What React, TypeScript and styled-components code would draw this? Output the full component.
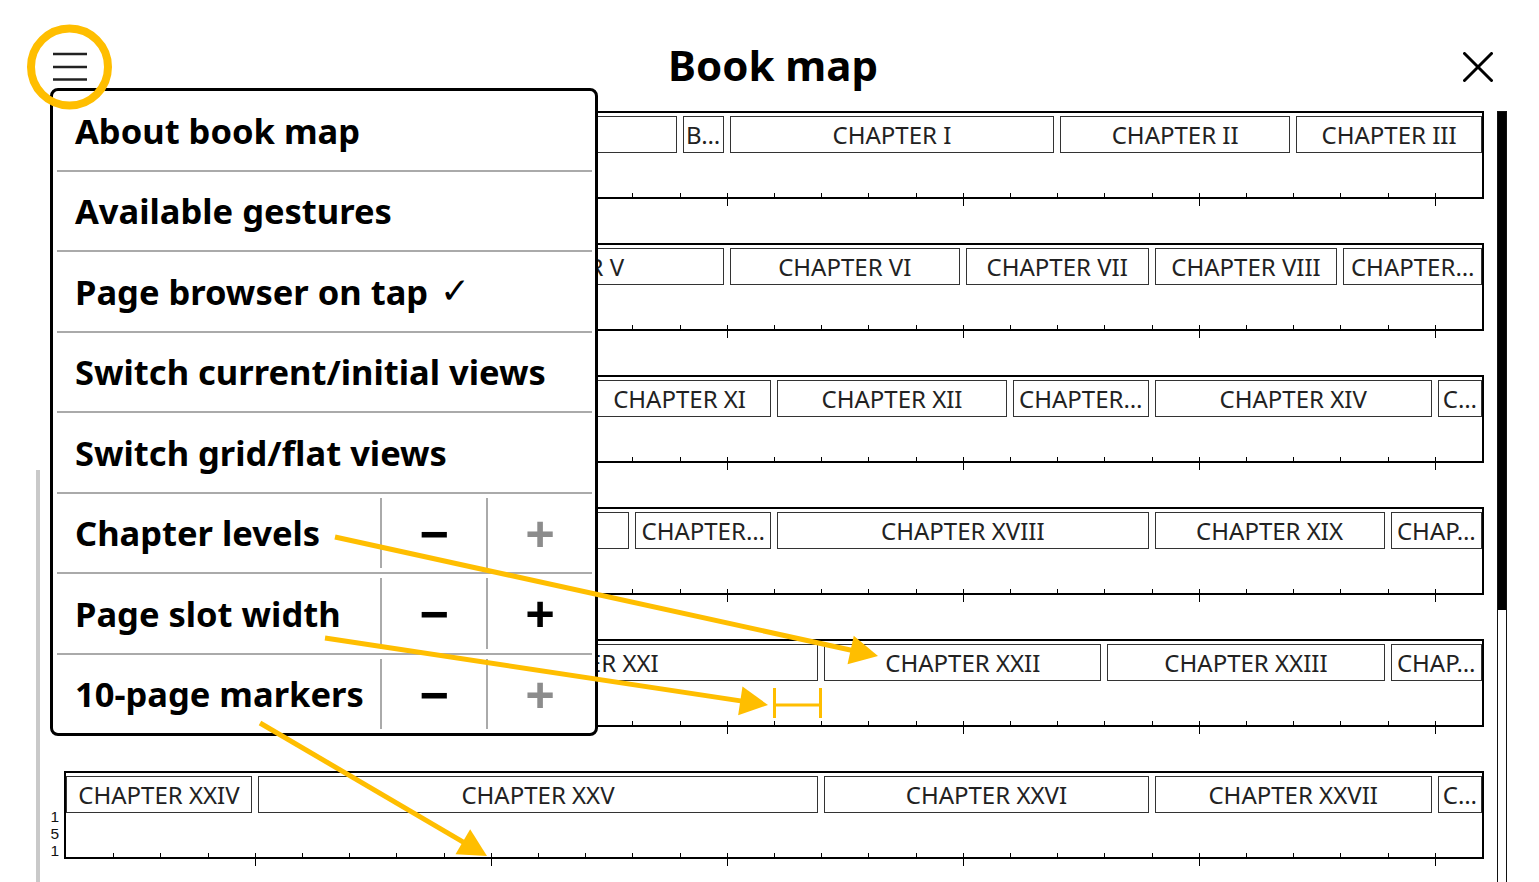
import React from 'react'
import styled, { createGlobalStyle } from 'styled-components'

const SLOT = 47.2
const PAGES_PER_ROW = 30
const YELLOW = '#FFBE00'

const GlobalStyle = createGlobalStyle`
  html, body {
    margin: 0;
    padding: 0;
    background: #fff;
  }
  body {
    font-family: 'Noto Sans', 'DejaVu Sans', sans-serif;
    color: #000;
  }
  * {
    box-sizing: border-box;
  }
`

const Screen = styled.div`
  position: relative;
  width: 1539px;
  height: 882px;
  overflow: hidden;
  display: flex;
  flex-direction: column;
  background: #fff;
`

const TitleBar = styled.header`
  height: 111px;
  flex-shrink: 0;
  padding: 22px 46px 0 53px;
  display: grid;
  grid-template-columns: 1fr auto 1fr;
  align-items: center;
`

const Title = styled.h1`
  margin: 0;
  padding-bottom: 4px;
  font-size: 42px;
  font-weight: 700;
  line-height: normal;
`

const IconButton = styled.button<{ $align: 'start' | 'end' }>`
  justify-self: ${({ $align }) => $align};
  display: flex;
  padding: 0;
  border: none;
  background: none;
  color: #000;
`

const MapArea = styled.div`
  flex: 1;
  min-height: 0;
  display: flex;
  padding-left: 36px;
  overflow: hidden;
`

const PositionBar = styled.div`
  width: 4px;
  flex-shrink: 0;
  margin-top: 359px;
  background: #c9c9c9;
`

const Rows = styled.div`
  display: flex;
  flex-direction: column;
  gap: 44px;
`

const MapRow = styled.div`
  display: flex;
  align-items: flex-end;
`

const PageNumber = styled.div`
  width: 24px;
  padding-right: 5px;
  display: flex;
  flex-direction: column;
  align-items: flex-end;
  font-family: 'Liberation Sans', 'Noto Sans', sans-serif;
  font-size: 15.5px;
  line-height: 17px;
  color: #111;
`

const Digit = styled.span`
  display: block;
  height: 17px;
`

const RowBox = styled.div`
  width: 1420px;
  height: 88px;
  border: 2px solid #000;
  display: flex;
  flex-direction: column;
  justify-content: space-between;
`

const ChapterStrip = styled.div`
  height: 37px;
  margin-top: 3px;
  display: flex;
  overflow: hidden;
`

const ChapterSpan = styled.div<{ $openLeft?: boolean; $openRight?: boolean }>`
  flex-shrink: 0;
  display: flex;
  padding-left: ${({ $openLeft }) => ($openLeft ? 0 : 3)}px;
  padding-right: ${({ $openRight }) => ($openRight ? 0 : 3)}px;
`

const ChapterBox = styled.div`
  flex: 1;
  min-width: 0;
  border: 1px solid #333;
  display: flex;
  align-items: center;
  justify-content: center;
  overflow: hidden;
  white-space: nowrap;
  font-size: 24px;
  line-height: 1;
  color: #222;
`

const Ruler = styled.svg`
  display: block;
  overflow: visible;
`

const ScrollTrack = styled.div`
  width: 10px;
  height: 900px;
  flex-shrink: 0;
  margin-left: 13px;
  border: 1px solid #111;
  display: flex;
  flex-direction: column;
`

const ScrollThumb = styled.div`
  height: 498px;
  background: #000;
`

const Menu = styled.div`
  position: absolute;
  left: 50px;
  top: 88px;
  width: 548px;
  z-index: 2;
  display: flex;
  flex-direction: column;
  background: #fff;
  border: 3px solid #000;
  border-radius: 8px;
`

const MenuItem = styled.div<{ $stepper?: boolean }>`
  height: 78.5px;
  display: flex;
  align-items: center;
  padding-left: 22px;
  padding-right: ${({ $stepper }) => ($stepper ? 3 : 22)}px;
  font-size: 34.5px;
  font-weight: 700;
  white-space: nowrap;
`

const MenuLabel = styled.span`
  flex: 1;
  display: flex;
  align-items: center;
`

const Check = styled.span`
  margin-left: 12px;
  font-family: 'DejaVu Sans', sans-serif;
  font-weight: 400;
  font-size: 36px;
  line-height: 1;
`

const MenuSeparator = styled.div`
  height: 2px;
  margin: 0 3px 0 4px;
  background: #aaa;
`

const StepDivider = styled.div`
  width: 2px;
  align-self: stretch;
  margin: 4px 0;
  background: #aaa;
`

const StepButton = styled.div<{ $disabled?: boolean }>`
  width: 104px;
  display: flex;
  justify-content: center;
  font-size: 52px;
  font-weight: 700;
  line-height: 1;
  color: ${({ $disabled }) => ($disabled ? '#8c8c8c' : '#000')};
`

const Annotations = styled.svg`
  position: absolute;
  left: 0;
  top: 0;
  z-index: 3;
  pointer-events: none;
`

type Chapter = { label: string; pages: number; openLeft?: boolean; openRight?: boolean }

// labels left blank where the slot lies wholly under the open menu
const rows: { first: string; chapters: Chapter[] }[] = [
  {
    first: '',
    chapters: [
      { label: '', pages: 1 },
      { label: '', pages: 12 },
      { label: 'B…', pages: 1 },
      { label: 'CHAPTER I', pages: 7 },
      { label: 'CHAPTER II', pages: 5 },
      { label: 'CHAPTER III', pages: 4, openRight: true },
    ],
  },
  {
    first: '',
    chapters: [
      { label: '', pages: 3, openLeft: true },
      { label: '', pages: 4 },
      { label: 'CHAPTER V', pages: 7 },
      { label: 'CHAPTER VI', pages: 5 },
      { label: 'CHAPTER VII', pages: 4 },
      { label: 'CHAPTER VIII', pages: 4 },
      { label: 'CHAPTER…', pages: 3, openRight: true },
    ],
  },
  {
    first: '',
    chapters: [
      { label: '', pages: 4, openLeft: true },
      { label: '', pages: 7 },
      { label: 'CHAPTER XI', pages: 4 },
      { label: 'CHAPTER XII', pages: 5 },
      { label: 'CHAPTER…', pages: 3 },
      { label: 'CHAPTER XIV', pages: 6 },
      { label: 'C…', pages: 1, openRight: true },
    ],
  },
  {
    first: '',
    chapters: [
      { label: '', pages: 5, openLeft: true },
      { label: '', pages: 7 },
      { label: 'CHAPTER…', pages: 3 },
      { label: 'CHAPTER XVIII', pages: 8 },
      { label: 'CHAPTER XIX', pages: 5 },
      { label: 'CHAP…', pages: 2, openRight: true },
    ],
  },
  {
    first: '',
    chapters: [
      { label: '', pages: 6, openLeft: true },
      { label: 'CHAPTER XXI', pages: 10 },
      { label: 'CHAPTER XXII', pages: 6 },
      { label: 'CHAPTER XXIII', pages: 6 },
      { label: 'CHAP…', pages: 2, openRight: true },
    ],
  },
  {
    first: '151',
    chapters: [
      { label: 'CHAPTER XXIV', pages: 4, openLeft: true },
      { label: 'CHAPTER XXV', pages: 12 },
      { label: 'CHAPTER XXVI', pages: 7 },
      { label: 'CHAPTER XXVII', pages: 6 },
      { label: 'C…', pages: 1, openRight: true },
    ],
  },
]

const menuItems: { label: string; checked?: boolean; stepper?: { minus: boolean; plus: boolean } }[] = [
  { label: 'About book map' },
  { label: 'Available gestures' },
  { label: 'Page browser on tap', checked: true },
  { label: 'Switch current/initial views' },
  { label: 'Switch grid/flat views' },
  { label: 'Chapter levels', stepper: { minus: true, plus: false } },
  { label: 'Page slot width', stepper: { minus: true, plus: true } },
  { label: '10-page markers', stepper: { minus: true, plus: false } },
]

const PageRuler = () => {
  const width = SLOT * PAGES_PER_ROW
  const ticks = []
  for (let n = 1; n < PAGES_PER_ROW; n++) {
    const x = Math.round(n * SLOT) + 0.5
    const big = n % 5 === 4
    ticks.push(<line key={n} x1={x} x2={x} y1={0} y2={big ? 13 : 4} stroke="#000" strokeWidth={1} />)
  }
  return (
    <Ruler width={width} height={4} viewBox={`0 0 ${width} 4`}>
      {ticks}
    </Ruler>
  )
}

const Arrow = ({ from, to }: { from: [number, number]; to: [number, number] }) => {
  const dx = to[0] - from[0]
  const dy = to[1] - from[1]
  const len = Math.hypot(dx, dy)
  const ux = dx / len
  const uy = dy / len
  const bx = to[0] - ux * 28
  const by = to[1] - uy * 28
  const px = -uy * 14.5
  const py = ux * 14.5
  return (
    <g fill={YELLOW} stroke="none">
      <line x1={from[0]} y1={from[1]} x2={bx + ux * 2} y2={by + uy * 2} stroke={YELLOW} strokeWidth={5} />
      <polygon points={`${to[0]},${to[1]} ${bx + px},${by + py} ${bx - px},${by - py}`} />
    </g>
  )
}

export default function App() {
  return (
    <>
      <GlobalStyle />
      <Screen>
        <TitleBar>
          <IconButton $align="start" aria-label="Menu">
            <svg width="34" height="30" viewBox="0 0 34 30">
              <g stroke="#222" strokeWidth="2.5">
                <line x1="0" y1="2" x2="34" y2="2" />
                <line x1="0" y1="15" x2="34" y2="15" />
                <line x1="0" y1="27.5" x2="34" y2="27.5" />
              </g>
            </svg>
          </IconButton>
          <Title>Book map</Title>
          <IconButton $align="end" aria-label="Close">
            <svg width="30" height="30" viewBox="0 0 30 30">
              <g stroke="#000" strokeWidth="3" strokeLinecap="round">
                <line x1="1.5" y1="1.5" x2="28.5" y2="28.5" />
                <line x1="28.5" y1="1.5" x2="1.5" y2="28.5" />
              </g>
            </svg>
          </IconButton>
        </TitleBar>

        <MapArea>
          <PositionBar />
          <Rows>
            {rows.map((row, r) => (
              <MapRow key={r}>
                <PageNumber>
                  {row.first.split('').map((d, i) => (
                    <Digit key={i}>{d}</Digit>
                  ))}
                </PageNumber>
                <RowBox>
                  <ChapterStrip>
                    {row.chapters.map((ch, i) => (
                      <ChapterSpan
                        key={i}
                        $openLeft={ch.openLeft}
                        $openRight={ch.openRight}
                        style={{ width: ch.pages * SLOT }}
                      >
                        <ChapterBox>{ch.label}</ChapterBox>
                      </ChapterSpan>
                    ))}
                  </ChapterStrip>
                  <PageRuler />
                </RowBox>
              </MapRow>
            ))}
          </Rows>
          <ScrollTrack>
            <ScrollThumb />
          </ScrollTrack>
        </MapArea>

        <Menu>
          {menuItems.map((item, i) => (
            <React.Fragment key={item.label}>
              {i > 0 && <MenuSeparator />}
              <MenuItem $stepper={!!item.stepper}>
                <MenuLabel>
                  {item.label}
                  {item.checked && <Check>✓</Check>}
                </MenuLabel>
                {item.stepper && (
                  <>
                    <StepDivider />
                    <StepButton $disabled={!item.stepper.minus}>−</StepButton>
                    <StepDivider />
                    <StepButton $disabled={!item.stepper.plus}>+</StepButton>
                  </>
                )}
              </MenuItem>
            </React.Fragment>
          ))}
        </Menu>

        <Annotations width="1539" height="882" viewBox="0 0 1539 882">
          <circle cx="69.5" cy="67" r="38.5" fill="none" stroke={YELLOW} strokeWidth="8" />
          <Arrow from={[335, 537]} to={[878, 656]} />
          <Arrow from={[325, 638]} to={[768, 705]} />
          <Arrow from={[260, 723]} to={[487, 856]} />
          <g stroke={YELLOW} strokeWidth="3" fill="none">
            <line x1="774.5" y1="688" x2="774.5" y2="718" />
            <line x1="820.5" y1="688" x2="820.5" y2="718" />
            <line x1="774.5" y1="705" x2="820.5" y2="705" />
          </g>
        </Annotations>
      </Screen>
    </>
  )
}
